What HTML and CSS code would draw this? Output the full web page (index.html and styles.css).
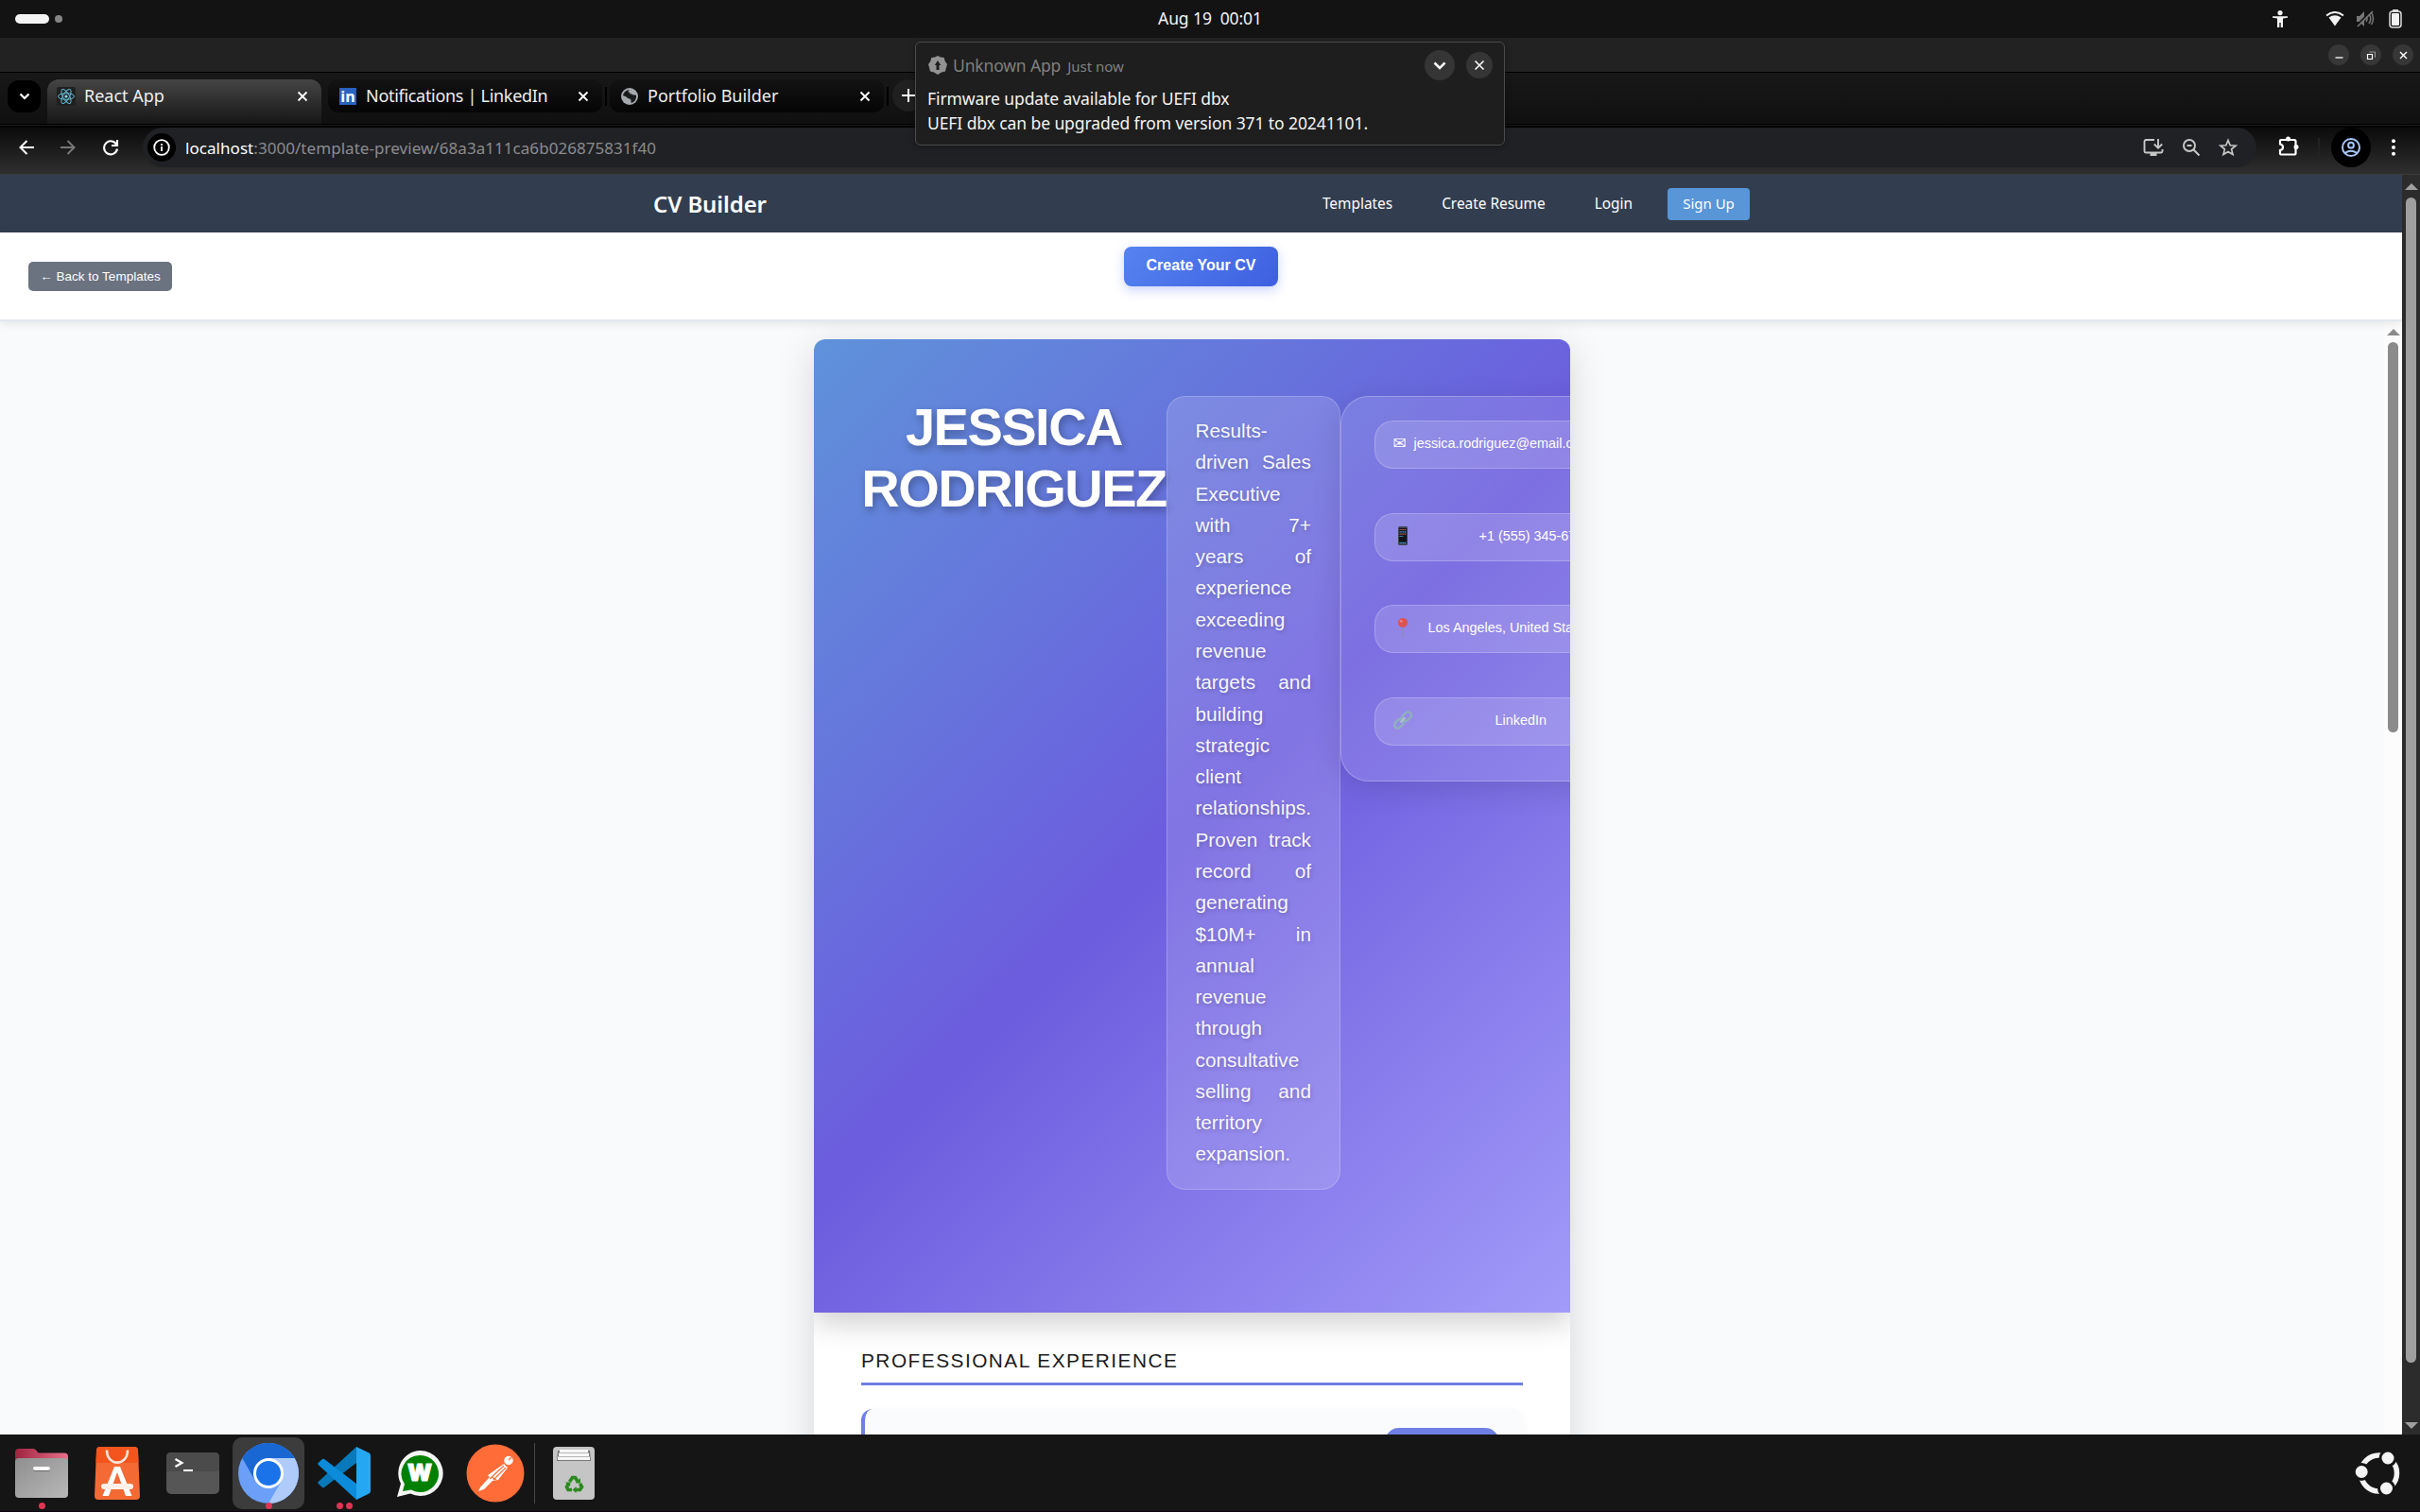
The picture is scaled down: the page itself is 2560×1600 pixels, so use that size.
FILE: index.html
```html
<!DOCTYPE html>
<html lang="en">
<head>
<meta charset="utf-8">
<title>React App</title>
<link rel="stylesheet" href="styles.css">
</head>
<body>
<div class="desktop">
  <header class="topbar">
    <div class="spaces"><span class="space-on"></span><span class="space-off"></span></div>
    <div class="clock">Aug 19 &nbsp;00:01</div>
    <div class="tray">
      <svg class="tray-access" width="16" height="18" viewBox="0 0 16 18" fill="#f2f2f2"><circle cx="8" cy="2.6" r="2.6"/><path d="M0 6.2h16v1.5l-5 .9V18H8.700v-5H7.300v5H5V8.600L0 7.700z"/></svg>
      <svg class="tray-wifi" width="20" height="16" viewBox="0 0 20 16"><path d="M1 4.500Q10-2.500 19 4.500" fill="none" stroke="#f2f2f2" stroke-width="2"/><path d="M3.500 6.500Q10 2 16.500 6.500L10 15.500z" fill="#f2f2f2"/></svg>
      <svg class="tray-mute" width="20" height="18" viewBox="0 0 20 18"><path d="M1 6h3l5-5v16l-5-5H1z" fill="#777"/><path d="M11 6q2 3 0 6M14 4q3.500 5 0 10M16.500 2q4 7 0 13" fill="none" stroke="#777" stroke-width="1.500"/><path d="M1 16L17 0" stroke="#131313" stroke-width="2"/><path d="M2 17L18 1" stroke="#777" stroke-width="1.700"/></svg>
      <svg class="tray-batt" width="14" height="20" viewBox="0 0 14 20"><path d="M4 0h6v3H4z" fill="#ddd"/><rect x="1" y="2" width="12" height="17" rx="3" fill="none" stroke="#ddd" stroke-width="1.500"/><rect x="3" y="4" width="8" height="13" rx="1" fill="#f2f2f2"/></svg>
    </div>
  </header>

  <div class="titlebar">
    <span class="win-btn"><svg width="11" height="11" viewBox="0 0 11 11"><path d="M1.500 8h8" stroke="#fff" stroke-width="1.300"/></svg></span>
    <span class="win-btn"><svg width="11" height="11" viewBox="0 0 11 11" fill="none"><path d="M1.500 4.500h5v5h-5z" stroke="#fff" stroke-width="1.200"/><path d="M3.500 2h6v6" stroke="#999"/></svg></span>
    <span class="win-btn"><svg width="11" height="11" viewBox="0 0 11 11"><path d="M2 2l7 7M9 2l-7 7" stroke="#fff" stroke-width="1.400"/></svg></span>
  </div>

  <div class="tabstrip">
    <span class="tab-search"><svg width="12" height="8" viewBox="0 0 12 8"><path d="M1.500 1.500L6 6l4.500-4.500" fill="none" stroke="#fff" stroke-width="2.200"/></svg></span>
    <div class="tab tab-active">
      <svg class="fav" width="20" height="20" viewBox="0 0 20 20" fill="none" stroke="#61b8d3"><rect width="20" height="20" rx="2" fill="#202020" stroke="none"/><ellipse cx="10" cy="10" rx="8.500" ry="3.300"/><ellipse cx="10" cy="10" rx="8.500" ry="3.300" transform="rotate(60 10 10)"/><ellipse cx="10" cy="10" rx="8.500" ry="3.300" transform="rotate(120 10 10)"/><circle cx="10" cy="10" r="1.600" fill="#8bdcf2" stroke="none"/></svg>
      <span class="tab-name">React App</span>
      <svg class="tab-x" width="12" height="12" viewBox="0 0 12 12"><path d="M1.500 1.500l9 9M10.500 1.500l-9 9" stroke="#fff" stroke-width="1.800"/></svg>
    </div>
    <div class="tab">
      <span class="fav fav-in">in</span>
      <span class="tab-name name-linkedin">Notifications | LinkedIn</span>
      <svg class="tab-x" width="12" height="12" viewBox="0 0 12 12"><path d="M1.500 1.500l9 9M10.500 1.500l-9 9" stroke="#fff" stroke-width="1.800"/></svg>
    </div>
    <span class="tab-sep"></span>
    <div class="tab">
      <svg class="fav" width="20" height="20" viewBox="0 0 20 20"><circle cx="10" cy="10" r="9" fill="#a5a8ad"/><path d="M11 3c-3 .5-3 2-1 3 .5 2 2 1 3 2s3 0 4 1c.5 4-2 7-5 8-1-1 0-3-1-4s-3-.5-4-2-3-1-4-2c1-4 4-6 8-6z" fill="#1a1b1d"/></svg>
      <span class="tab-name">Portfolio Builder</span>
      <svg class="tab-x" width="12" height="12" viewBox="0 0 12 12"><path d="M1.500 1.500l9 9M10.500 1.500l-9 9" stroke="#fff" stroke-width="1.800"/></svg>
    </div>
    <span class="tab-sep"></span>
    <span class="new-tab"><svg width="14" height="14" viewBox="0 0 14 14"><path d="M7 0v14M0 7h14" stroke="#fff" stroke-width="2"/></svg></span>
  </div>

  <div class="toolbar">
    <div class="nav-icons">
      <svg width="16" height="16" viewBox="0 0 16 16" fill="none" stroke="#fff" stroke-width="2"><path d="M16 8H2M8.500 1L1.500 8l7 7"/></svg>
      <svg width="16" height="16" viewBox="0 0 16 16" fill="none" stroke="#777" stroke-width="2"><path d="M0 8h14M7.500 1l7 7-7 7"/></svg>
      <svg width="18" height="18" viewBox="0 0 18 18" fill="none" stroke="#fff" stroke-width="2.100"><path d="M15.500 6.500A7 7 0 1 0 16 10.500M16 1v6h-6"/></svg>
    </div>
    <div class="omnibox">
      <span class="info"><svg width="18" height="18" viewBox="0 0 18 18" fill="none" stroke="#fff" stroke-width="1.800"><circle cx="9" cy="9" r="7.800"/><path d="M9 8v5M9 5v1.900"/></svg></span>
      <span class="url"><b>localhost</b>:3000/template-preview/68a3a111ca6b026875831f40</span>
      <div class="omni-icons">
        <svg width="22" height="20" viewBox="0 0 22 20" fill="none" stroke="#c7c7c7" stroke-width="1.900"><path d="M12 2H3.500Q1.500 2 1.500 4v10q0 1.500 1.500 1.500h16q1.500 0 1.500-1.500v-2"/><path d="M16 1v9M11.800 6.500L16 10.600l4.200-4.100"/><path d="M7.500 17.500h7" stroke-width="3"/></svg>
        <svg width="20" height="20" viewBox="0 0 20 20" fill="none" stroke="#c7c7c7" stroke-width="2"><circle cx="8" cy="8" r="6"/><path d="M5.500 8h5M12.300 12.300L18.500 18.500"/></svg>
        <svg width="20" height="20" viewBox="0 0 20 20" fill="none" stroke="#c7c7c7" stroke-width="1.700"><path d="M10 2.500l2.200 5.300 5.800.4-4.400 3.700 1.400 5.600-5-3-5 3 1.400-5.600L2 8.200l5.800-.4z"/></svg>
      </div>
    </div>
    <svg class="puzzle" width="22" height="22" viewBox="0 0 22 22"><path d="M3 4h14q1.500 0 1.500 1.500V18q0 1.500-1.500 1.500H3q-1 0-1-1v-3.500q3-.5 3-3.200T2 8.500V5q0-1 1-1z" fill="none" stroke="#fff" stroke-width="2.200"/><circle cx="10.500" cy="3" r="2.500" fill="#fff"/><circle cx="19" cy="11.500" r="2.500" fill="#fff"/></svg>
    <span class="bar-sep"></span>
    <span class="profile"><svg width="20" height="20" viewBox="0 0 20 20" fill="none" stroke="#a8c7fa" stroke-width="2"><circle cx="10" cy="10" r="9"/><circle cx="10" cy="7.700" r="2.900"/><path d="M3.800 15.800q6-4 12.400 0"/></svg></span>
    <svg class="kebab" width="6" height="18" viewBox="0 0 6 18" fill="#fff"><circle cx="3" cy="2.200" r="2"/><circle cx="3" cy="9" r="2"/><circle cx="3" cy="15.800" r="2"/></svg>
  </div>

  <div class="viewport">
    <div class="page">
      <nav class="site-nav">
        <span class="brand">CV Builder</span>
        <div class="links"><a>Templates</a><a>Create Resume</a><a>Login</a><a class="signup">Sign Up</a></div>
      </nav>
      <div class="preview-head">
        <button class="back">← Back to Templates</button>
        <button class="create">Create Your CV</button>
      </div>
      <div class="preview">
        <div class="canvas">
          <article class="resume">
            <header class="hero">
              <h1>JESSICA RODRIGUEZ</h1>
              <p class="summary">Results-driven Sales Executive with 7+ years of experience exceeding revenue targets and building strategic client relationships. Proven track record of generating $10M+ in annual revenue through consultative selling and territory expansion.</p>
              <div class="contact">
                <div class="item item-mail"><span class="icon glyph">✉</span><span>jessica.rodriguez@email.com</span></div>
                <div class="item item-phone"><svg class="icon" width="20" height="20" viewBox="0 0 20 20"><rect x="5" y="0" width="10" height="20" rx="1.500" fill="#3f4554"/><rect x="6" y="2" width="8" height="16" fill="#10121c"/><path d="M6.500 3.500h7M6.500 8.200h7" stroke="#c8695f" stroke-width="1.200" stroke-dasharray="1.300 .5"/><path d="M6.500 5.800h7M6.500 10.500h4M6.500 17.300h7" stroke="#4fa3d8" stroke-width="1.200" stroke-dasharray="1.300 .5"/></svg><span>+1 (555) 345-6789</span></div>
                <div class="item item-place"><svg class="icon" width="20" height="20" viewBox="0 0 20 20"><path d="M10 9v11" stroke="#8e8bbd" stroke-width="1.600"/><circle cx="10" cy="5" r="5" fill="#dd5350"/><circle cx="8.300" cy="3.300" r="1.400" fill="#ee8580"/></svg><span>Los Angeles, United States</span></div>
                <div class="item item-link"><svg class="icon" width="20" height="20" viewBox="0 0 20 20" fill="none" stroke="#8fb0bd" stroke-width="2.400"><rect x="8.500" y="2.800" width="11" height="7" rx="3.500" transform="rotate(-45 14 6.300)"/><rect x="0.500" y="10.200" width="11" height="7" rx="3.500" transform="rotate(-45 6 13.700)"/><path d="M7.500 12.500l5-5" stroke="#a8c3ca"/></svg><span>LinkedIn</span></div>
              </div>
            </header>
            <section class="body">
              <h2>PROFESSIONAL EXPERIENCE</h2>
              <div class="job"><span class="pill"></span></div>
            </section>
          </article>
        </div>
        <div class="scroll scroll-light"><i class="arr-up"></i><i class="thumb"></i></div>
      </div>
    </div>
    <div class="scroll scroll-dark"><i class="arr-up"></i><i class="thumb"></i><i class="arr-down"></i></div>
  </div>

  <footer class="dock">
    <div class="app"><svg width="56" height="56" viewBox="0 0 56 56"><defs><linearGradient id="fr"><stop offset="0" stop-color="#9e2340"/><stop offset="1" stop-color="#e8708a"/></linearGradient><linearGradient id="fg" x2="1" y2="1"><stop offset="0" stop-color="#8f8f8f"/><stop offset="1" stop-color="#b8b8b8"/></linearGradient></defs><path d="M0 24V6q0-4 4-4h15q2 0 3.500 2l2 2.500H52q4 0 4 4V24z" fill="url(#fr)"/><rect y="12" width="56" height="42" rx="4" fill="url(#fg)"/><rect x="19" y="22" width="18" height="4" rx="2" fill="#666"/><rect x="19" y="21" width="18" height="4" rx="2" fill="#fff"/></svg><div class="dots"><i></i></div></div>
    <div class="app"><svg width="48" height="56" viewBox="0 0 48 56"><path d="M6 0h36q4 0 4 4l2 48q0 4-4 4H4q-4 0-4-4L2 4q0-4 4-4z" fill="#f36a34"/><path d="M6 0h36q4 0 4 4l.5 13h-45L2 4q0-4 4-4z" fill="#f4551c"/><path d="M13 3.500C13 21 35 21 35 3.500" fill="none" stroke="#fbe5dc" stroke-width="2.600"/><path d="M21 21h6l12.500 31H33l-9-25-9 25H8.500z" fill="#fff"/><rect x="7" y="39" width="34" height="6" rx="3" fill="#fff0ea"/></svg></div>
    <div class="app"><svg width="56" height="56" viewBox="0 0 56 56"><rect y="6" width="56" height="44" rx="5" fill="#565656"/><path d="M0 26V11q0-5 5-5h46q5 0 5 5v15z" fill="#4b4b4b"/><path d="M9.500 13l7 4-7 4M18 25h10" fill="none" stroke="#fff" stroke-width="2.200"/></svg></div>
    <div class="app app-on"><svg width="64" height="64" viewBox="0 0 64 64"><circle cx="32" cy="32" r="32" fill="#6b9ff8"/><path d="M4.300 16A32 32 0 0 1 59.700 16L32 16 18.100 40z" fill="#1967d2"/><path d="M59.700 16A32 32 0 0 1 32 64L45.900 40 32 16z" fill="#aecbfa"/><circle cx="32" cy="32" r="16" fill="#fff"/><circle cx="32" cy="32" r="13" fill="#1a73e8"/></svg><div class="dots"><i></i></div></div>
    <div class="app"><svg width="56" height="56" viewBox="0 0 56 56"><path d="M41 0v17L7 43q-1 .6-2 0L.7 39q-1-1 0-2z" fill="#0879ba"/><path d="M41 56V39L7 13q-1-.6-2 0L.7 17q-1 1 0 2z" fill="#0b8bd9"/><path d="M41 0l13 6.300q2 1 2 3v37.400q0 2-2 3L41 56z" fill="#25a7f2"/></svg><div class="dots"><i></i><i></i></div></div>
    <div class="app"><svg width="50" height="50" viewBox="0 0 50 50"><path d="M25 1a24 24 0 1 1-10 45.500L1 50l4-14A24 24 0 0 1 25 1z" fill="#f4f4f4"/><path d="M25 6a19.500 19.500 0 1 1-9 36.500L7 44l2-7.500A19.500 19.500 0 0 1 25 6z" fill="#008000"/></svg><span class="w-mark">W</span></div>
    <div class="app"><svg width="62" height="62" viewBox="0 0 62 62"><circle cx="31" cy="31" r="30.500" fill="#ff6c37"/><circle cx="45" cy="17.500" r="4.700" fill="#fff"/><path d="M40 21l4 4-10 13-6 1-9 9-6 2 2-4 10-11-2-2z" fill="#fff"/><path d="M40 23L25 37M42 25L29 38M27 35l5 3M45 17l3-3" stroke="#ff6c37" stroke-width="1.200"/></svg></div>
    <span class="dock-sep"></span>
    <div class="app trash"><svg width="44" height="56" viewBox="0 0 44 56"><rect width="44" height="56" rx="4" fill="#c5c5c5"/><path d="M5 4h34l1 11H4z" fill="#777"/><path d="M7 3h30v3H7zM6 6.500h32v3.500H6zM5 10.500h34V14H5z" fill="#f7f7f7"/><g fill="none" stroke="#2b8a1e" stroke-width="3.600"><path d="M17.500 37l3-4.500h3l2.500 4"/><path d="M28.500 39l2 3.500-2 3H24"/><path d="M20 45.500h-4l-1.500-3 2-4"/></g><path d="M29 33v5.500h-5.500zM24.500 42v7l-4-3.500zM13 37.500l5.500 0-.5 4.500z" fill="#2b8a1e"/></svg></div>
    <svg class="ubuntu" width="50" height="48" viewBox="0 0 50 48"><circle cx="26.500" cy="24" r="19" fill="none" stroke="#f4f4f4" stroke-width="5.500"/><g fill="#f4f4f4" stroke="#151515" stroke-width="3"><circle cx="36" cy="8" r="8"/><circle cx="8.200" cy="22.500" r="8"/><circle cx="34.500" cy="40" r="8"/></g></svg>
  </footer>

  <aside class="toast">
    <div class="toast-head">
      <svg width="20" height="20" viewBox="0 0 20 20"><path d="M10 0l3 1.600 3.700.5 1 3.600L20 9l-1 3.500-1 4-4 1L10 20l-4-2.500-4-1-1-4L0 9l2.300-3.300 1-3.600L7 1.600z" fill="#929292"/><path d="M10 5l3.200 5h-1.700v5h-3v-5H6.800z" fill="#1e1e1e"/></svg>
      <span class="toast-app">Unknown App</span><span class="toast-when">Just now</span>
      <span class="round round-lg"><svg width="14" height="9" viewBox="0 0 14 9"><path d="M1.500 1.500L7 7l5.500-5.500" fill="none" stroke="#fff" stroke-width="2.500"/></svg></span>
      <span class="round"><svg width="12" height="12" viewBox="0 0 12 12"><path d="M1.500 1.500l9 9M10.500 1.500l-9 9" stroke="#fff" stroke-width="1.500"/></svg></span>
    </div>
    <p>Firmware update available for UEFI dbx</p>
    <p class="toast-body">UEFI dbx can be upgraded from version 371 to 20241101.</p>
  </aside>
</div>
</body>
</html>
```
FILE: styles.css
```css
* { box-sizing: border-box; }
body { margin: 0; font-family: "Noto Sans", sans-serif; background: #151515; }
svg { display: block; flex: none; }
.desktop { position: relative; width: 2560px; height: 1600px; overflow: hidden; display: flex; flex-direction: column; }

/* system bar */
.topbar { height: 40px; background: #131313; display: grid; grid-template-columns: 1fr auto 1fr; align-items: center; color: #f2f2f2; }
.spaces { display: flex; align-items: center; gap: 6px; padding-left: 16px; }
.space-on { width: 36px; height: 10px; border-radius: 5px; background: #f4f4f4; }
.space-off { width: 8px; height: 8px; border-radius: 50%; background: #858585; }
.clock { font-size: 17.500px; letter-spacing: -0.1px; line-height: 38px; padding-bottom: 2px; }
.tray { display: flex; align-items: center; justify-content: flex-end; padding-right: 19px; }
.tray-wifi { margin-left: 40px; }
.tray-mute { margin-left: 12px; }
.tray-batt { margin-left: 15px; }

.titlebar { height: 37px; background: #222; border-bottom: 1px solid #000; display: flex; justify-content: flex-end; align-items: center; gap: 12px; padding-right: 7px; }
.win-btn { width: 22px; height: 22px; border-radius: 50%; background: #373737; display: grid; place-items: center; }

/* browser tabs */
.tabstrip { height: 58px; background: linear-gradient(#181818, #101010 54px, #000 54px, #000 55px, #1c1c1c 55px, #1c1c1c 56px, #000 56px); padding: 7px 0 4px 8px; display: flex; align-items: flex-start; }
.tab-search { width: 35px; height: 34px; margin: 1px 7px 0 0; border-radius: 12px; background: #000; display: grid; place-items: center; }
.tab { width: 290px; height: 35px; padding: 0 14px 0 11px; display: flex; align-items: center; border-radius: 10px; background: linear-gradient(#131313, #050505); }
.tab-active { height: 47px; margin-right: 7px; padding: 0 14px 12px 10px; border-radius: 12px 12px 0 0; background: linear-gradient(#454545, #161616); }
.fav { width: 20px; height: 20px; flex: none; }
.fav-in { width: 18px; height: 18px; margin: 0 1px; background: #2a62bf; color: #fff; font: bold 16px/18px "Open Sans", sans-serif; text-align: center; }
.tab-name { margin-left: 9px; flex: 1; white-space: nowrap; font-size: 18px; line-height: 33px; padding-bottom: 1px; color: #efefef; }
.name-linkedin { letter-spacing: -0.300px; }
.tab-sep { width: 2px; height: 20px; margin: 8px 3px 0; background: #000; }
.new-tab { width: 34px; height: 34px; margin-left: 1px; border-radius: 50%; background: #202020; display: grid; place-items: center; }

/* address bar */
.toolbar { height: 50px; background: linear-gradient(#0b0b0b, #2f2f2f 49px, #3b3a38 49px); display: flex; align-items: flex-start; }
.nav-icons { width: 151px; height: 42px; padding-left: 20px; display: flex; align-items: center; gap: 28px; }
.omnibox { width: 2236px; height: 42px; padding: 0 20px 0 5px; border-radius: 21px; background: #202124; display: flex; align-items: center; }
.info { width: 30px; height: 30px; border-radius: 50%; background: #000; display: grid; place-items: center; }
.url { margin-left: 10px; flex: 1; font-size: 17px; letter-spacing: 0.050px; line-height: 42px; color: #8b8c8f; padding-top: 1px; }
.url b { font-weight: 400; color: #fff; }
.omni-icons { display: flex; align-items: center; gap: 19px; }
.puzzle { margin: 9px 0 0 23px; }
.bar-sep { width: 2px; height: 20px; margin: 11px 12px 0 20px; background: #222; }
.profile { width: 42px; height: 42px; border-radius: 50%; background: #000; display: grid; place-items: center; }
.kebab { margin: 12px 0 0 21px; }

/* page */
.viewport { height: 1333px; display: flex; overflow: hidden; }
.page { width: 2541px; display: flex; flex-direction: column; }
.site-nav { height: 61px; flex: none; background: #323e4f; padding: 0 690px 0 691px; display: flex; justify-content: space-between; align-items: center; color: #fff; }
.brand { font-size: 24px; font-weight: 600; letter-spacing: -0.100px; }
.links { display: flex; align-items: center; font-size: 15.400px; gap: 52px; white-space: nowrap; }
.links a { padding-bottom: 1px; }
.links .signup { margin-left: -15px; width: 87px; height: 34px; line-height: 33px; text-align: center; background: #5896d8; border-radius: 4px; font-size: 15px; }
.preview-head { height: 94px; flex: none; background: #fff; border-bottom: 2px solid #e2e8f0; box-shadow: 0 2px 10px rgba(0,0,0,.1); display: grid; grid-template-columns: 1fr 163px 1fr; padding: 0 30px; z-index: 1; }
button { border: 0; color: #fff; font-family: "Liberation Sans", Arial, sans-serif; padding: 0; }
.back { width: 152px; height: 31px; margin-top: 31px; border-radius: 5px; background: #6b7280; font-size: 13.500px; }
.create { height: 42px; margin-top: 15px; padding-bottom: 3px; border-radius: 8px; background: linear-gradient(135deg, #5584f0, #3e5fe0); box-shadow: 0 4px 12px rgba(79,110,240,.3); font-size: 16px; font-weight: 700; }
.preview { flex: 1; min-height: 0; display: flex; background: #f8fafc; }
.canvas { width: 2522px; padding-top: 19px; display: flex; justify-content: center; align-items: flex-start; overflow: hidden; font-family: "Liberation Sans", Arial, sans-serif; }
.resume { width: 800px; height: 1400px; background: #fff; border-radius: 12px; overflow: hidden; box-shadow: 0 10px 40px rgba(0,0,0,.15); }
.hero { position: relative; height: 1030px; padding: 60px 50px; display: flex; align-items: flex-start; color: #fff; background: linear-gradient(135deg, #5f92da 0%, #6c5cde 50%, #a29bf9 100%); box-shadow: 0 10px 30px rgba(0,0,0,.2); }
h1 { margin: 0; width: 323px; flex: none; font-size: 56px; line-height: 65px; letter-spacing: -1.500px; text-align: center; text-shadow: 2px 4px 8px rgba(0,0,0,.3); }
.summary { margin: 0; width: 184px; flex: none; padding: 19px 30px 20px 29.500px; border: 1px solid rgba(255,255,255,.2); border-radius: 20px; background: rgba(255,255,255,.15); font-size: 20.800px; line-height: 33.280px; text-align: justify; text-shadow: 1px 2px 4px rgba(0,0,0,.2); color: rgba(255,255,255,.95); }
.contact { width: 380px; height: 408px; margin-left: -0.500px; flex: none; padding: 25px 35px; display: flex; flex-direction: column; gap: 46.600px; border: 1px solid rgba(255,255,255,.25); border-radius: 30px; background: rgba(255,255,255,.12); box-shadow: 0 8px 32px rgba(0,0,0,.12); }
.item { height: 51px; flex: none; display: flex; align-items: center; padding: 0 19px 3px; border: 1px solid rgba(255,255,255,.22); border-radius: 20px; background: rgba(255,255,255,.15); font-size: 14.400px; white-space: nowrap; }
.icon { width: 20px; flex: none; }
.glyph { font: 17px "DejaVu Sans", sans-serif; text-align: left; }
.item-mail { gap: 2px; }
.item-phone { gap: 71px; }
.item-place { gap: 17px; }
.item-link { gap: 88px; }
.body { padding: 37px 50px 0; }
h2 { margin: 0; height: 40px; border-bottom: 3px solid #6f7fe3; font-size: 20.800px; font-weight: 400; line-height: 27px; letter-spacing: 1.500px; color: #1a1a1a; }
.job { margin-top: 25px; height: 200px; padding: 20px 25px; display: flex; justify-content: flex-end; border-left: 4px solid #6f7fe3; border-radius: 12px; background: #fafbfd; box-shadow: 0 2px 8px rgba(0,0,0,.04); }
.pill { width: 121px; height: 34px; border-radius: 15px; background: #6f7fe3; }

/* scrollbars */
.scroll { width: 19px; flex: none; display: flex; flex-direction: column; align-items: center; }
.scroll-light { background: #fcfcfc; padding-top: 8px; }
.scroll-dark { background: #2c2c2c; padding: 9px 0 6px; }
.thumb { width: 11px; border-radius: 6px; margin-top: 8px; }
.scroll-light .thumb { height: 413px; margin-top: 7px; background: #8b8b8b; }
.scroll-dark .thumb { height: 1233px; background: #9f9f9f; }
.arr-up, .arr-down { width: 0; border: 7px solid transparent; }
.arr-up { border-top: 0; border-bottom-color: #9f9f9f; }
.scroll-light .arr-up { border-bottom-color: #8b8b8b; }
.arr-down { border-bottom: 0; border-top-color: #9f9f9f; margin-top: auto; }

/* dock */
.dock { height: 82px; background: #151515; border-bottom: 1px solid #0c0210; padding-left: 4px; display: flex; align-items: center; }
.app { position: relative; width: 76px; height: 76px; margin: 0 2px; border-radius: 10px; display: grid; place-items: center; flex: none; }
.app-on { background: #3c3c3c; }
.dots { position: absolute; bottom: 0; left: 0; right: 0; display: flex; justify-content: center; gap: 3px; }
.dots i { width: 7px; height: 7px; border-radius: 50%; background: #e03454; }
.w-mark { position: absolute; top: 22px; left: 0; width: 76px; text-align: center; color: #fff; font: 900 24px/32px Inter, Roboto, sans-serif; -webkit-text-stroke: 1px #fff; }
.dock-sep { width: 1px; height: 64px; background: #484848; margin-left: 1px; }
.trash { margin-left: 3px; }
.ubuntu { margin: 0 20px 0 auto; }

/* notification */
.toast { position: absolute; left: 968px; top: 44px; width: 624px; height: 110px; padding: 8px 12px; background: #1e1e1e; border: 1px solid #4a4a4a; border-radius: 6px; color: #f4f4f4; font-size: 17.500px; box-shadow: 0 2px 6px rgba(0,0,0,.3); }
.toast-head { height: 32px; display: flex; align-items: center; color: #808080; }
.toast-head > svg { margin: 0 6px 0 1px; }
.toast-app { letter-spacing: -0.150px; }
.toast-when { margin-left: 7px; font-size: 15px; flex: 1; padding-top: 2px; }
.round { width: 28px; height: 28px; border-radius: 50%; background: #353535; display: grid; place-items: center; margin: 0 0 0 12px; }
.round-lg { width: 32px; height: 32px; }
.toast p { margin: 6px 0 0; line-height: 26px; white-space: nowrap; letter-spacing: -0.090px; }
.toast p.toast-body { margin: 0; }
```
